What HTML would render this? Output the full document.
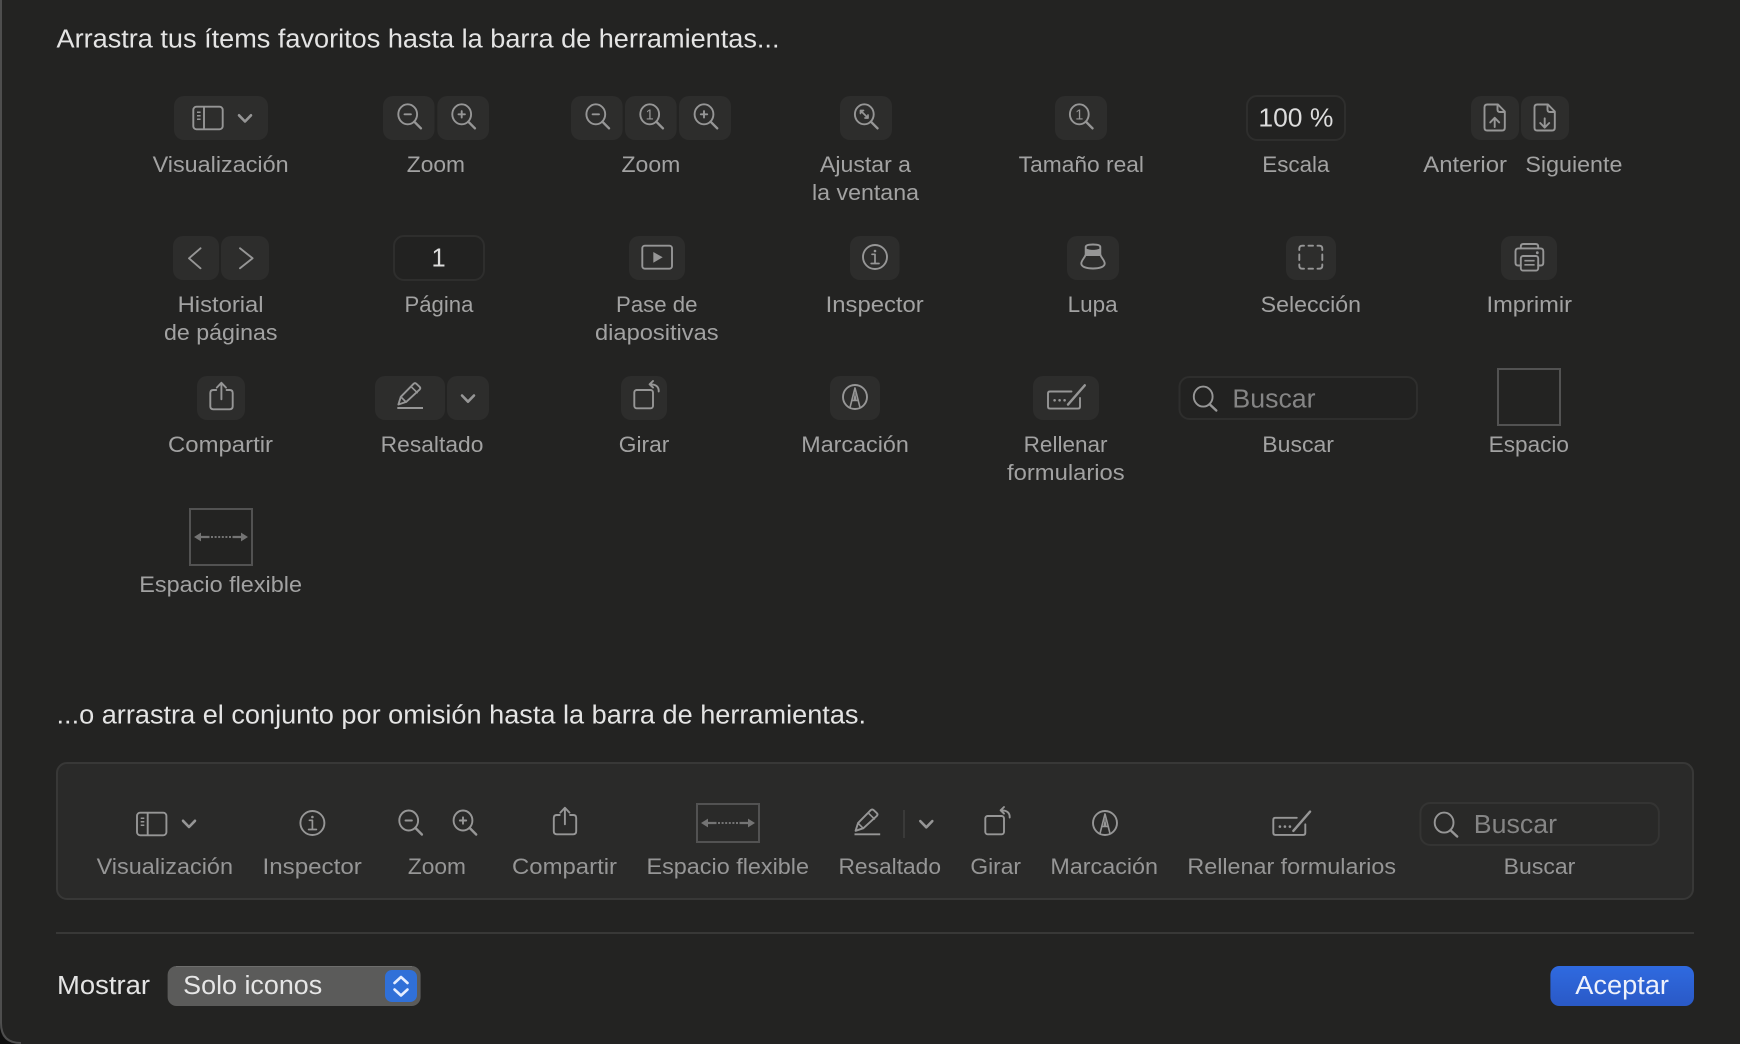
<!DOCTYPE html>
<html lang="es">
<head>
<meta charset="utf-8">
<title>Personalizar barra de herramientas</title>
<style>
html,body{margin:0;padding:0;background:#232322;width:1740px;height:1044px;overflow:hidden}
svg{display:block}
text{font-family:"Liberation Sans",sans-serif}
.t{font-size:25.5px;fill:#e4e4e4}
.l{font-size:22px;fill:#a2a2a2}
.p{font-size:22px;fill:#969696}
.b{fill:#2d2d2c}
.f{fill:#222221;stroke:#2e2e2d;stroke-width:2}
.i{fill:none;stroke:#969696;stroke-width:1.9;stroke-linecap:round;stroke-linejoin:round}
.s{fill:none;stroke:#525252;stroke-width:2}
.n{fill:#969696;stroke:none}
</style>
</head>
<body>
<svg width="1740" height="1044" viewBox="0 0 1740 1044" xmlns="http://www.w3.org/2000/svg">
<defs>
  <g id="glass" class="i"><ellipse rx="9.4" ry="10"/><path d="M6.6 7.4L13.2 14" stroke-width="2.4"/></g>
  <g id="minus"><use href="#glass"/><path class="i" d="M-3.2 0H3.2"/></g>
  <g id="plus"><use href="#glass"/><path class="i" d="M-3.2 0H3.2M0 -3.2V3.2"/></g>
  <path id="chev" class="i" d="M-6 -3.2L0 3L6 -3.2" style="stroke-width:2.6"/>
  <g id="sidebar" class="i">
    <rect x="193.3" y="106.7" width="29.4" height="22.6" rx="3.2"/>
    <path d="M204 107V129"/>
    <path d="M197 112.3H200.6M197 115.8H200.6M197 119.3H200.6" style="stroke-width:1.5;stroke-linecap:butt"/>
  </g>
  <g id="info" class="i">
    <circle cx="875" cy="257" r="12"/>
    <path d="M872 254.3H875V263.4M871.2 263.5H879" style="stroke-width:1.7"/>
    <circle cx="875" cy="251" r="1.3" class="n"/>
  </g>
  <g id="share" class="i">
    <path d="M216.2 390H213.3Q210.3 390 210.3 393V406.3Q210.3 409.3 213.3 409.3H229.7Q232.7 409.3 232.7 406.3V393Q232.7 390 229.7 390H226.6"/>
    <path d="M221.4 399.3V383M216.8 387.6L221.4 382.8L226 387.6"/>
  </g>
  <g id="pen" class="i">
    <path d="M398.4 404.5L400.8 396.8L413.6 383.8Q415 382.5 416.4 383.8L419.6 386.8Q421 388.2 419.6 389.6L406.2 401.9Z"/>
    <path d="M411 386.6L417.2 392.6M401 397L406 402" style="stroke-width:1.6"/>
    <path d="M397.3 408H423" style="stroke-linecap:butt"/>
  </g>
  <g id="rot" class="i">
    <rect x="634.3" y="390" width="18.7" height="18.3" rx="2.4"/>
    <path d="M658.7 391.5Q659 384.3 650 384.3M653 381L649.6 384.3L653 387.6"/>
  </g>
  <g id="marc" class="i">
    <circle cx="855" cy="397" r="12"/>
    <path d="M850 407.5L855 388L860 407.5" style="stroke-width:1.6"/>
    <path d="M851.6 400.5H858.4" style="stroke-width:1.4"/>
    <path class="n" d="M855 392L856.6 400H853.4Z"/>
  </g>
  <g id="fill" class="i">
    <path d="M1071.5 391.5H1050Q1048 391.5 1048 393.5V406.6Q1048 408.6 1050 408.6H1078Q1080 408.6 1080 406.6V398"/>
    <path d="M1068 404.6L1084.8 385.3" style="stroke-width:2.4"/>
    <circle class="n" cx="1054.6" cy="400.3" r="1.3"/><circle class="n" cx="1059.6" cy="400.3" r="1.3"/><circle class="n" cx="1064.6" cy="400.3" r="1.3"/>
  </g>
  <g id="srch" class="i">
    <ellipse cx="1203.2" cy="396.6" rx="9.4" ry="10"/>
    <path d="M1209.6 404.2L1216.3 410.5" style="stroke-width:2.4"/>
  </g>
  <g id="flex">
    <path d="M194 537L201 532.6V535.9H209.5V538.1H201V541.4Z" fill="#747474"/>
    <path d="M248 537L241 532.6V535.9H232.5V538.1H241V541.4Z" fill="#747474"/>
    <path d="M211 537H232" stroke="#747474" stroke-width="2" stroke-dasharray="2 1.6" fill="none"/>
  </g>
</defs>

<rect width="1740" height="1044" fill="#232322"/>
<path d="M0 1024V1044H20Q0 1044 0 1024Z" fill="#0e0e0e"/>
<path d="M1 0V1023Q1 1043 21 1043" fill="none" stroke="#4e4e4e" stroke-width="2"/>

<!-- headings -->
<text class="t" x="56.5" y="47.7" textLength="723" lengthAdjust="spacingAndGlyphs">Arrastra tus ítems favoritos hasta la barra de herramientas...</text>
<text class="t" x="56.5" y="723.7" textLength="809.5" lengthAdjust="spacingAndGlyphs">...o arrastra el conjunto por omisión hasta la barra de herramientas.</text>

<!-- row 1 buttons -->
<rect class="b" x="174" y="96" width="94" height="44" rx="10"/>
<rect class="b" x="383" y="96" width="51.5" height="44" rx="10"/>
<rect class="b" x="437.3" y="96" width="51.7" height="44" rx="10"/>
<rect class="b" x="571" y="96" width="51.6" height="44" rx="10"/>
<rect class="b" x="625" y="96" width="51.6" height="44" rx="10"/>
<rect class="b" x="679" y="96" width="52" height="44" rx="10"/>
<rect class="b" x="840" y="96" width="52" height="44" rx="10"/>
<rect class="b" x="1055" y="96" width="52" height="44" rx="10"/>
<rect class="f" x="1247" y="96" width="98" height="44" rx="10"/>
<rect class="b" x="1471" y="96" width="48" height="44" rx="10"/>
<rect class="b" x="1521" y="96" width="48" height="44" rx="10"/>

<use href="#sidebar"/>
<use href="#chev" transform="translate(245 118.5)"/>
<use href="#minus" transform="translate(407.7 114.3)"/>
<use href="#plus" transform="translate(461.7 114.3)"/>
<use href="#minus" transform="translate(595.8 114.3)"/>
<use href="#glass" transform="translate(649.7 114.3)"/>
<text x="649.7" y="119.5" font-size="14.5" text-anchor="middle" fill="#969696">1</text>
<use href="#plus" transform="translate(704 114.3)"/>
<use href="#glass" transform="translate(864.3 114.3)"/>
<path class="i" d="M860.5 110.5L868 118M860.5 110.5h3M860.5 110.5v3M868 118h-3M868 118v-3" style="stroke-width:1.7"/>
<use href="#glass" transform="translate(1079.3 114.3)"/>
<text x="1079.3" y="119.5" font-size="14.5" text-anchor="middle" fill="#969696">1</text>
<text x="1258.4" y="126.7" font-size="25.5" fill="#dcdcdc" textLength="75" lengthAdjust="spacingAndGlyphs">100 %</text>
<g class="i">
  <path d="M1498 104.5H1487.3Q1484.5 104.5 1484.5 107.3V127.7Q1484.5 130.5 1487.3 130.5H1502Q1504.8 130.5 1504.8 127.7V111.5Z"/>
  <path d="M1497.5 104.8V109.5Q1497.5 112 1500 112H1504.5"/>
  <path d="M1494.7 127V118M1490.2 122.4L1494.7 117.8L1499.2 122.4"/>
  <path d="M1548 104.5H1537.3Q1534.5 104.5 1534.5 107.3V127.7Q1534.5 130.5 1537.3 130.5H1552Q1554.8 130.5 1554.8 127.7V111.5Z"/>
  <path d="M1547.5 104.8V109.5Q1547.5 112 1550 112H1554.5"/>
  <path d="M1544.7 118.3V127.4M1540.2 123L1544.7 127.6L1549.2 123"/>
</g>

<!-- row 1 labels -->
<text class="l" x="152.6" y="172" textLength="136" lengthAdjust="spacingAndGlyphs">Visualización</text>
<text class="l" x="406.8" y="172" textLength="58.2" lengthAdjust="spacingAndGlyphs">Zoom</text>
<text class="l" x="621.5" y="172" textLength="58.8" lengthAdjust="spacingAndGlyphs">Zoom</text>
<text class="l" x="820" y="172" textLength="91" lengthAdjust="spacingAndGlyphs">Ajustar a</text>
<text class="l" x="812" y="200" textLength="107" lengthAdjust="spacingAndGlyphs">la ventana</text>
<text class="l" x="1018.7" y="172" textLength="125.3" lengthAdjust="spacingAndGlyphs">Tamaño real</text>
<text class="l" x="1262.3" y="172" textLength="67.2" lengthAdjust="spacingAndGlyphs">Escala</text>
<text class="l" x="1423.3" y="172" textLength="83.7" lengthAdjust="spacingAndGlyphs">Anterior</text>
<text class="l" x="1525.4" y="172" textLength="97" lengthAdjust="spacingAndGlyphs">Siguiente</text>

<!-- row 2 buttons -->
<rect class="b" x="173" y="236" width="46" height="44" rx="10"/>
<rect class="b" x="221" y="236" width="48" height="44" rx="10"/>
<rect class="f" x="394" y="236" width="90" height="44" rx="10"/>
<rect class="b" x="629" y="236" width="56" height="44" rx="10"/>
<rect class="b" x="850" y="236" width="49.5" height="44" rx="10"/>
<rect class="b" x="1067" y="236" width="52" height="44" rx="10"/>
<rect class="b" x="1286" y="236" width="50" height="44" rx="10"/>
<rect class="b" x="1501" y="236" width="56" height="44" rx="10"/>

<path class="i" d="M200.5 248.3L189 258.3L200.5 268.3"/>
<path class="i" d="M240 248.3L252.6 258.3L240 268.3"/>
<text x="438.6" y="266.7" font-size="25.5" text-anchor="middle" fill="#dcdcdc">1</text>
<rect class="i" x="642.3" y="245.7" width="29.7" height="23" rx="2.6"/>
<path class="n" d="M653.3 252L662.7 257.3L653.3 262.7Z"/>
<use href="#info"/>
<path class="i" d="M1085.7 247C1085.7 245 1089 244.5 1093 244.5C1097 244.5 1100.3 245 1100.3 247V254C1100.3 257 1104.7 260 1104.7 263.5C1104.7 267 1099 268.5 1093 268.5C1087 268.5 1081.3 267 1081.3 263.5C1081.3 260 1085.7 257 1085.7 254Z"/>
<path class="n" d="M1085.7 248C1088 250.5 1098 250.5 1100.3 248V256H1085.7Z"/>
<g class="i">
  <path d="M1299.3 250V248.7Q1299.3 245.7 1302.3 245.7H1304M1308.5 245.7H1313M1317.5 245.7H1319.3Q1322.3 245.7 1322.3 248.7V250M1322.3 254.5V260M1322.3 264.5V265.7Q1322.3 268.7 1319.3 268.7H1317.5M1313 268.7H1308.5M1304 268.7H1302.3Q1299.3 268.7 1299.3 265.7V264.5M1299.3 260V254.5"/>
</g>
<g class="i">
  <path d="M1520.8 248.3V246.6Q1520.8 244 1523.4 244H1535.6Q1538.2 244 1538.2 246.6V248.3"/>
  <path d="M1520.8 265.5H1518.3Q1515.5 265.5 1515.5 262.7V251.3Q1515.5 248.4 1518.3 248.4H1540.5Q1543.3 248.4 1543.3 251.3V262.7Q1543.3 265.5 1540.5 265.5H1538.2"/>
  <rect x="1520.8" y="256" width="17.4" height="14.6" rx="2.4"/>
  <path d="M1524.4 260.7H1534.6M1524.4 264.8H1534.6" style="stroke-width:1.6;stroke-linecap:butt"/>
  <circle class="n" cx="1537.3" cy="252.7" r="1.4"/>
</g>

<!-- row 2 labels -->
<text class="l" x="177.6" y="312" textLength="86" lengthAdjust="spacingAndGlyphs">Historial</text>
<text class="l" x="164" y="340" textLength="113.5" lengthAdjust="spacingAndGlyphs">de páginas</text>
<text class="l" x="404.5" y="312" textLength="68.9" lengthAdjust="spacingAndGlyphs">Página</text>
<text class="l" x="616" y="312" textLength="81.5" lengthAdjust="spacingAndGlyphs">Pase de</text>
<text class="l" x="595" y="340" textLength="123.6" lengthAdjust="spacingAndGlyphs">diapositivas</text>
<text class="l" x="825.7" y="312" textLength="98" lengthAdjust="spacingAndGlyphs">Inspector</text>
<text class="l" x="1067.6" y="312" textLength="50" lengthAdjust="spacingAndGlyphs">Lupa</text>
<text class="l" x="1260.7" y="312" textLength="100.3" lengthAdjust="spacingAndGlyphs">Selección</text>
<text class="l" x="1486.5" y="312" textLength="85.5" lengthAdjust="spacingAndGlyphs">Imprimir</text>

<!-- row 3 buttons -->
<rect class="b" x="197" y="376" width="48" height="44" rx="10"/>
<rect class="b" x="375" y="376" width="70" height="44" rx="10"/>
<rect class="b" x="447" y="376" width="42" height="44" rx="10"/>
<rect class="b" x="621" y="376" width="46" height="44" rx="10"/>
<rect class="b" x="830" y="376" width="50" height="44" rx="10"/>
<rect class="b" x="1033" y="376" width="66" height="44" rx="10"/>
<rect class="f" x="1179.5" y="377" width="237.5" height="42" rx="10"/>
<rect class="s" x="1498" y="369" width="62" height="56"/>

<use href="#share"/>
<use href="#pen"/>
<use href="#chev" transform="translate(468 398.7)"/>
<use href="#rot"/>
<use href="#marc"/>
<use href="#fill"/>
<use href="#srch"/>
<text x="1232.4" y="407.6" font-size="25.5" fill="#858585" textLength="83.2" lengthAdjust="spacingAndGlyphs">Buscar</text>

<!-- row 3 labels -->
<text class="l" x="168" y="452" textLength="105" lengthAdjust="spacingAndGlyphs">Compartir</text>
<text class="l" x="380.7" y="452" textLength="102.7" lengthAdjust="spacingAndGlyphs">Resaltado</text>
<text class="l" x="618.8" y="452" textLength="50.5" lengthAdjust="spacingAndGlyphs">Girar</text>
<text class="l" x="801.3" y="452" textLength="107.5" lengthAdjust="spacingAndGlyphs">Marcación</text>
<text class="l" x="1023.7" y="452" textLength="83.8" lengthAdjust="spacingAndGlyphs">Rellenar</text>
<text class="l" x="1007" y="480" textLength="117.7" lengthAdjust="spacingAndGlyphs">formularios</text>
<text class="l" x="1262.3" y="452" textLength="71.7" lengthAdjust="spacingAndGlyphs">Buscar</text>
<text class="l" x="1488.7" y="452" textLength="80.3" lengthAdjust="spacingAndGlyphs">Espacio</text>

<!-- row 4 -->
<rect class="s" x="190" y="509" width="62" height="56"/>
<use href="#flex"/>
<text class="l" x="139.3" y="592" textLength="162.7" lengthAdjust="spacingAndGlyphs">Espacio flexible</text>

<!-- default set palette -->
<rect x="57" y="763" width="1636" height="136" rx="10" fill="#2a2a29" stroke="#383837" stroke-width="2"/>
<use href="#sidebar" transform="translate(-56.3 706)"/>
<use href="#chev" transform="translate(189 824)"/>
<use href="#info" transform="translate(-562.6 566)"/>
<use href="#minus" transform="translate(408.7 820.5)"/>
<use href="#plus" transform="translate(463 820.5)"/>
<use href="#share" transform="translate(343.5 425)"/>
<rect class="s" x="697" y="804" width="62" height="38"/>
<use href="#flex" transform="translate(507 286)"/>
<use href="#pen" transform="translate(457.2 426.3)"/>
<path d="M904 810V838" stroke="#3a3a39" stroke-width="2"/>
<use href="#chev" transform="translate(926.3 824.3)"/>
<use href="#rot" transform="translate(351 426)"/>
<use href="#marc" transform="translate(250 426)"/>
<use href="#fill" transform="translate(225.3 426.3)"/>
<rect x="1420.4" y="803" width="238.5" height="42" rx="10" fill="#292928" stroke="#343433" stroke-width="2"/>
<use href="#srch" transform="translate(240.9 426)"/>
<text x="1473.8" y="833" font-size="25.5" fill="#858585" textLength="83.2" lengthAdjust="spacingAndGlyphs">Buscar</text>

<text class="p" x="96.6" y="874" textLength="136.4" lengthAdjust="spacingAndGlyphs">Visualización</text>
<text class="p" x="262.5" y="874" textLength="99.3" lengthAdjust="spacingAndGlyphs">Inspector</text>
<text class="p" x="407.9" y="874" textLength="58.1" lengthAdjust="spacingAndGlyphs">Zoom</text>
<text class="p" x="512" y="874" textLength="105" lengthAdjust="spacingAndGlyphs">Compartir</text>
<text class="p" x="646.5" y="874" textLength="162.5" lengthAdjust="spacingAndGlyphs">Espacio flexible</text>
<text class="p" x="838.5" y="874" textLength="102.5" lengthAdjust="spacingAndGlyphs">Resaltado</text>
<text class="p" x="970.4" y="874" textLength="50.6" lengthAdjust="spacingAndGlyphs">Girar</text>
<text class="p" x="1050.4" y="874" textLength="107.6" lengthAdjust="spacingAndGlyphs">Marcación</text>
<text class="p" x="1187.4" y="874" textLength="208.6" lengthAdjust="spacingAndGlyphs">Rellenar formularios</text>
<text class="p" x="1503.7" y="874" textLength="71.6" lengthAdjust="spacingAndGlyphs">Buscar</text>

<!-- divider -->
<rect x="56" y="932" width="1638" height="2" fill="#383837"/>

<!-- footer -->
<text x="57" y="994" font-size="25.5" fill="#e4e4e4" textLength="93" lengthAdjust="spacingAndGlyphs">Mostrar</text>
<rect x="167.6" y="966" width="253" height="40" rx="9" fill="#5b5b5a"/>
<path d="M176 966.5H412" stroke="#6e6e6d" stroke-width="1"/>
<text x="183.2" y="994" font-size="25.5" fill="#e6e6e6" textLength="139" lengthAdjust="spacingAndGlyphs">Solo iconos</text>
<rect x="385" y="970" width="32" height="32" rx="7" fill="#3070d8"/>
<path d="M394.5 983L401 977L407.5 983M394.5 989.5L401 995.5L407.5 989.5" fill="none" stroke="#e6eeff" stroke-width="2.6" stroke-linecap="round" stroke-linejoin="round"/>

<defs><linearGradient id="ok" x1="0" y1="0" x2="0" y2="1"><stop offset="0" stop-color="#2f6ae0"/><stop offset="1" stop-color="#2a59c6"/></linearGradient></defs>
<rect x="1550.4" y="966" width="143.6" height="40" rx="9" fill="url(#ok)"/>
<text x="1575.3" y="994" font-size="25.5" fill="#eef1fb" textLength="93.7" lengthAdjust="spacingAndGlyphs">Aceptar</text>
</svg>
</body>
</html>
